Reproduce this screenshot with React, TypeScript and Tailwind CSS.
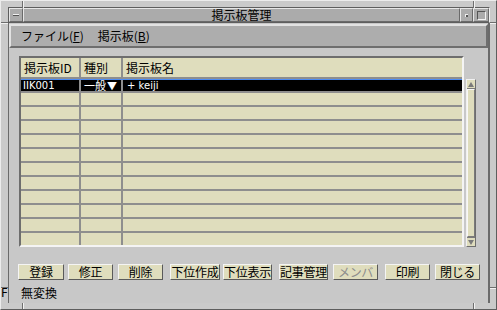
import React from 'react';

const beige = 'bg-[#dfddbd]';

const rows = Array.from({ length: 11 }, (_, i) => i);

const buttons = [
  { label: '登録', cls: 'ml-[9px] w-[46px]' },
  { label: '修正', cls: 'ml-[4px] w-[45px]' },
  { label: '削除', cls: 'ml-[5px] w-[45px]' },
  { label: '下位作成', cls: 'ml-[7px] w-[50px]' },
  { label: '下位表示', cls: 'ml-[3px] w-[49px]' },
  { label: '記事管理', cls: 'ml-[7px] w-[49px]' },
  { label: 'メンバ', cls: 'ml-[5px] w-[45px]', disabled: true },
  { label: '印刷', cls: 'ml-[7px] w-[45px]' },
  { label: '閉じる', cls: 'ml-[5px] w-[45px]' },
];

function Mnemonic({ text, k }: { text: string; k: string }) {
  return (
    <span>
      {text}(<span className="underline">{k}</span>)
    </span>
  );
}

export default function App() {
  return (
    <div className="relative w-[497px] h-[310px] overflow-hidden bg-[#cacaca] border border-t-[#ececec] border-l-[#ececec] border-r-[#5e5e5e] border-b-[#5e5e5e] font-['Noto_Sans_CJK_JP',sans-serif] text-[12px] leading-none text-black">
      {/* resize corner marks */}
      <div className="absolute left-[21px] top-0 w-[1px] h-[7px] bg-[#6e6e6e]" />
      <div className="absolute left-[22px] top-0 w-[1px] h-[7px] bg-[#f2f2f2]" />
      <div className="absolute left-[472px] top-0 w-[1px] h-[7px] bg-[#6e6e6e]" />
      <div className="absolute left-[473px] top-0 w-[1px] h-[7px] bg-[#f2f2f2]" />
      <div className="absolute left-0 top-[21px] w-[7px] h-[1px] bg-[#6e6e6e]" />
      <div className="absolute left-0 top-[22px] w-[7px] h-[1px] bg-[#f2f2f2]" />
      <div className="absolute right-0 top-[21px] w-[6px] h-[1px] bg-[#6e6e6e]" />
      <div className="absolute right-0 top-[22px] w-[6px] h-[1px] bg-[#f2f2f2]" />
      <div className="absolute left-0 top-[286px] w-[7px] h-[1px] bg-[#6e6e6e]" />
      <div className="absolute left-0 top-[287px] w-[7px] h-[1px] bg-[#f2f2f2]" />
      <div className="absolute right-0 top-[286px] w-[6px] h-[1px] bg-[#6e6e6e]" />
      <div className="absolute right-0 top-[287px] w-[6px] h-[1px] bg-[#f2f2f2]" />
      <div className="absolute left-[21px] bottom-0 w-[1px] h-[6px] bg-[#6e6e6e]" />
      <div className="absolute left-[22px] bottom-0 w-[1px] h-[6px] bg-[#f2f2f2]" />
      <div className="absolute left-[472px] bottom-0 w-[1px] h-[6px] bg-[#6e6e6e]" />
      <div className="absolute left-[473px] bottom-0 w-[1px] h-[6px] bg-[#f2f2f2]" />

      <div className="flex flex-col h-full pt-[6px] pl-[7px] pr-[6px] pb-[6px]">
        {/* title bar */}
        <div className="flex h-[16px] bg-[#ababab] border border-t-[#5e5e5e] border-l-[#5e5e5e] border-r-[#f0f0f0] border-b-[#5e5e5e]">
          <div className="w-[14px] flex items-center justify-center border border-t-[#e6e6e6] border-l-[#e6e6e6] border-r-[#6a6a6a] border-b-[#6a6a6a]">
            <div className="w-[6px] h-[2px] bg-[#f2f2f2] border-b border-[#555]" />
          </div>
          <div className="flex-1 flex items-center justify-center text-[12px] border border-t-[#e6e6e6] border-l-[#e6e6e6] border-r-[#6a6a6a] border-b-[#6a6a6a]">
            掲示板管理
          </div>
          <div className="w-[13px] flex items-center justify-center border border-t-[#e6e6e6] border-l-[#e6e6e6] border-r-[#6a6a6a] border-b-[#6a6a6a]">
            <div className="w-[3px] h-[3px] bg-[#555] border-l border-t border-[#eee]" />
          </div>
          <div className="w-[16px] flex items-center justify-center border border-t-[#e6e6e6] border-l-[#e6e6e6] border-r-[#6a6a6a] border-b-[#6a6a6a]">
            <div className="w-[9px] h-[9px] border border-t-[#555] border-l-[#555] border-r-[#f2f2f2] border-b-[#f2f2f2]" />
          </div>
        </div>

        {/* body */}
        <div className="flex-1 flex flex-col bg-[#c8c8c8] border-r-2 border-r-[#6a6a6a] border-l border-l-[#6a6a6a]">
          {/* menu bar */}
          <div className="h-[24px] mt-[1px] flex items-center bg-[#adadad] border-2 border-t-[#e2e2e2] border-l-[#e2e2e2] border-r-[#6e6e6e] border-b-[#6e6e6e] text-[12px]">
            <div className="ml-[10px]"><Mnemonic text="ファイル" k="F" /></div>
            <div className="ml-[14px]"><Mnemonic text="掲示板" k="B" /></div>
          </div>

          {/* table + scrollbar */}
          <div className="flex mt-[8px] ml-[10px]">
            <div className="w-[445px] h-[191px] border-2 border-t-[#6e6e6e] border-l-[#6e6e6e] border-r-[#f4f4f4] border-b-[#f4f4f4] bg-[#8e8e8e] flex flex-col gap-[2px]">
              <div className="flex gap-[2px] h-[19px]">
                <div className={`w-[58px] ${beige} flex items-center pl-[3px]`}>掲示板ID</div>
                <div className={`w-[40px] ${beige} flex items-center pl-[3px]`}>種別</div>
                <div className={`flex-1 ${beige} flex items-center pl-[3px]`}>掲示板名</div>
              </div>
              <div className="flex gap-[2px] h-[12px] border-t border-t-[#4d8df5] text-white text-[11px]">
                <div className="w-[58px] bg-black flex items-center pl-[2px] font-['DejaVu_Sans',sans-serif] text-[10px]">IIK001</div>
                <div className="w-[40px] bg-black flex items-center pl-[3px] whitespace-nowrap">
                  一般<span className="text-[10px] ml-[1px]">▼</span>
                </div>
                <div className="flex-1 bg-black flex items-center pl-[4px] font-['DejaVu_Sans',sans-serif] text-[10px]">+ keiji</div>
              </div>
              {rows.map((r) => (
                <div key={r} className="flex gap-[2px] h-[12px]">
                  <div className={`w-[58px] ${beige}`} />
                  <div className={`w-[40px] ${beige}`} />
                  <div className={`flex-1 ${beige}`} />
                </div>
              ))}
            </div>

            {/* scrollbar */}
            <div className="ml-[2px] mt-[23px] w-[10px] h-[168px] flex flex-col bg-[#c0c0c0] border border-t-[#f0f0f0] border-l-[#f0f0f0] border-r-[#6e6e6e] border-b-[#6e6e6e]">
              <div className={`h-[9px] ${beige} flex items-center justify-center border-b border-[#7a7a7a]`}>
                <svg width="6" height="5" viewBox="0 0 6 5"><path d="M3 0 L6 5 L0 5 Z" fill="#7a7a7a" /></svg>
              </div>
              <div className={`flex-1 ${beige} border border-t-[#f8f8f8] border-l-[#f8f8f8] border-r-[#7a7a7a] border-b-[#7a7a7a]`} />
              <div className={`h-[9px] ${beige} flex items-center justify-center border-t border-[#7a7a7a]`}>
                <svg width="6" height="5" viewBox="0 0 6 5"><path d="M0 0 L6 0 L3 5 Z" fill="#7a7a7a" /></svg>
              </div>
            </div>
          </div>

          {/* buttons */}
          <div className="flex mt-[17px] h-[16px]">
            {buttons.map((b) => (
              <div
                key={b.label}
                className={`${b.cls} ${beige} flex items-center justify-center whitespace-nowrap overflow-hidden tracking-[-0.3px] border border-t-[#f4f4f4] border-l-[#f4f4f4] border-r-[#5a5a5a] border-b-[#5a5a5a] text-[12px] ${b.disabled ? 'text-[#8c8c8c]' : 'text-black'}`}
              >
                {b.label}
              </div>
            ))}
          </div>
        </div>
      </div>

      {/* IME status */}
      <div className="absolute left-0 top-[284px] flex items-center h-[15px] text-[12px] z-10">
        <span className="font-['DejaVu_Sans',sans-serif] text-[12px]">F</span>
        <span className="ml-[13px]">無変換</span>
      </div>
    </div>
  );
}
